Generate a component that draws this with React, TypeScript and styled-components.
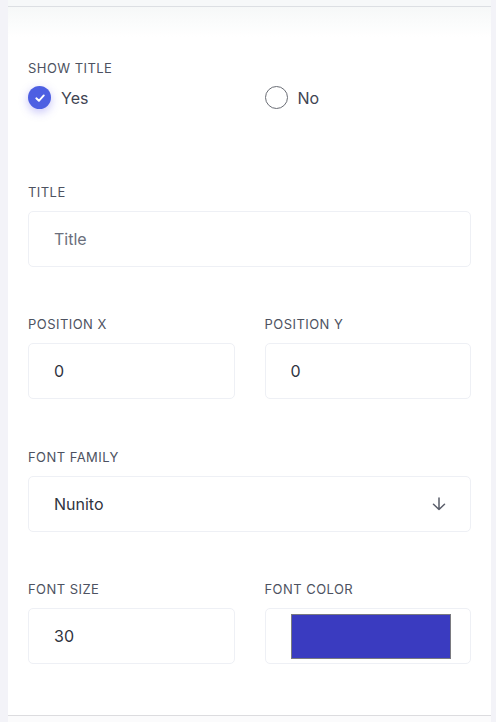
import React from "react";
import styled, { createGlobalStyle } from "styled-components";

const GlobalStyle = createGlobalStyle`
  html, body { margin: 0; padding: 0; }
  body {
    background: #f3f3f8;
    font-family: Inter, "Noto Sans", "Liberation Sans", sans-serif;
    -webkit-font-smoothing: antialiased;
  }
  * { box-sizing: border-box; }
`;

const Page = styled.div`
  margin: 0 5px 0 8px;
  min-height: 722px;
  display: flex;
  flex-direction: column;
`;

const TopStrip = styled.div`
  height: 7px;
  background: #f6f8f9;
  border-bottom: 1px solid #dcdfe3;
`;

const Panel = styled.div`
  background: linear-gradient(#f6f8f8 0px, #ffffff 30px);
  padding: 52px 20px 51px;
  display: flex;
  flex-direction: column;
  gap: 48.5px;
  border-bottom: 1px solid #dcdcdf;
`;

const BottomStrip = styled.div`
  flex: 1;
  background: #fbfbfc;
`;

const Section = styled.div`
  display: flex;
  flex-direction: column;
`;

const Row = styled.div`
  display: grid;
  grid-template-columns: 1fr 1fr;
  column-gap: 30px;
`;

const Label = styled.div`
  font-size: 13px;
  line-height: 18px;
  color: #4d5261;
  text-transform: uppercase;
  letter-spacing: 0.45px;
  margin-bottom: 10px;
`;

const RadioGroup = styled.div`
  display: grid;
  grid-template-columns: 1fr 1fr;
  column-gap: 30px;
  padding-bottom: 25px;
  margin-top: -1px;
`;

const RadioOption = styled.label`
  display: flex;
  align-items: center;
  gap: 10px;
  font-size: 16px;
  color: #3f4452;
  height: 23px;
`;

const RadioCircle = styled.span<{ $checked?: boolean }>`
  width: 23px;
  height: 23px;
  border-radius: 50%;
  display: inline-flex;
  align-items: center;
  justify-content: center;
  flex-shrink: 0;
  background: ${(p) => (p.$checked ? "#4d5fe2" : "#ffffff")};
  border: ${(p) => (p.$checked ? "none" : "1.5px solid #6a6d75")};
  box-shadow: ${(p) => (p.$checked ? "0 3px 10px rgba(90, 80, 235, 0.35)" : "none")};
`;

const InputBox = styled.div<{ $placeholder?: boolean }>`
  height: 56px;
  border: 1px solid #eef0f5;
  border-radius: 5px;
  background: #ffffff;
  display: flex;
  align-items: center;
  justify-content: space-between;
  padding: 0 24px 0 25px;
  font-size: 16px;
  color: ${(p) => (p.$placeholder ? "#6b6f7c" : "#30343f")};
`;

const ColorBox = styled.div`
  height: 56px;
  border: 1px solid #eef0f5;
  border-radius: 5px;
  background: #ffffff;
  padding: 5px 19px 4px 25px;
  display: flex;
`;

const Swatch = styled.div<{ $color: string }>`
  flex: 1;
  background: ${(p) => p.$color};
  border: 1px solid #7a7a80;
`;

const Check = () => (
  <svg width="12" height="12" viewBox="0 0 12 12" fill="none">
    <path d="M2.3 6.3 L4.9 8.8 L9.8 3.4" stroke="#fff" strokeWidth="1.9" strokeLinecap="round" strokeLinejoin="round" />
  </svg>
);

const ArrowDown = () => (
  <svg width="14" height="14" viewBox="0 0 14 14" fill="none">
    <path d="M7 1 V12.5 M1.5 7.2 L7 12.5 L12.5 7.2" stroke="#5a5e6a" strokeWidth="1.5" strokeLinecap="round" strokeLinejoin="round" />
  </svg>
);

export default function App() {
  return (
    <>
      <GlobalStyle />
      <Page>
        <TopStrip />
        <Panel>
          <Section>
            <Label>Show Title</Label>
            <RadioGroup>
              <RadioOption>
                <RadioCircle $checked>
                  <Check />
                </RadioCircle>
                Yes
              </RadioOption>
              <RadioOption>
                <RadioCircle />
                No
              </RadioOption>
            </RadioGroup>
          </Section>

          <Section>
            <Label>Title</Label>
            <InputBox $placeholder>Title</InputBox>
          </Section>

          <Row>
            <Section>
              <Label>Position X</Label>
              <InputBox>0</InputBox>
            </Section>
            <Section>
              <Label>Position Y</Label>
              <InputBox>0</InputBox>
            </Section>
          </Row>

          <Section>
            <Label>Font Family</Label>
            <InputBox>
              Nunito
              <ArrowDown />
            </InputBox>
          </Section>

          <Row>
            <Section>
              <Label>Font Size</Label>
              <InputBox>30</InputBox>
            </Section>
            <Section>
              <Label>Font Color</Label>
              <ColorBox>
                <Swatch $color="#3a3bc0" />
              </ColorBox>
            </Section>
          </Row>
        </Panel>
        <BottomStrip />
      </Page>
    </>
  );
}
